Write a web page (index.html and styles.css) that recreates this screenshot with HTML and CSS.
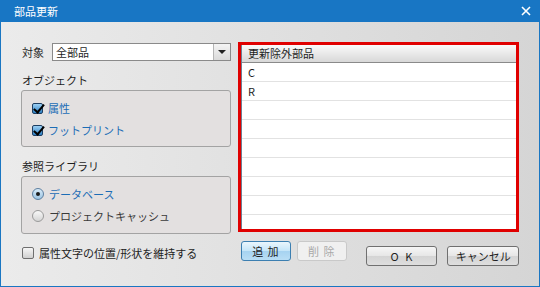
FILE: index.html
```html
<!DOCTYPE html>
<html lang="ja">
<head>
    <meta charset="UTF-8">
    <title>部品更新</title>
    <link rel="stylesheet" href="styles.css">
</head>
<body>
    <div class="window">
        <div class="titlebar">
            <span class="title">部品更新</span>
            <svg class="close" width="10" height="10" viewBox="0 0 10 10">
                <path d="M1 1 L9 9 M9 1 L1 9" stroke="#fff" stroke-width="1.6"/>
            </svg>
        </div>

        <div class="content">
            <div class="left">
                <div class="target-row">
                    <span class="label">対象</span>
                    <div class="combo">
                        <span class="combo-text">全部品</span>
                        <span class="combo-btn"><span class="arrow"></span></span>
                    </div>
                </div>

                <div class="group-title">オブジェクト</div>
                <div class="group">
                    <div class="option checked">
                        <span class="check on"></span><span class="opt-text">属性</span>
                    </div>
                    <div class="option checked">
                        <span class="check on"></span><span class="opt-text">フットプリント</span>
                    </div>
                </div>

                <div class="group-title second">参照ライブラリ</div>
                <div class="group second">
                    <div class="option checked">
                        <span class="radio on"></span><span class="opt-text">データベース</span>
                    </div>
                    <div class="option">
                        <span class="radio"></span><span class="opt-text">プロジェクトキャッシュ</span>
                    </div>
                </div>

                <div class="keep-row">
                    <span class="check"></span><span>属性文字の位置/形状を維持する</span>
                </div>
            </div>

            <div class="right">
                <div class="highlight">
                    <div class="list">
                        <div class="list-head">更新除外部品</div>
                        <div class="list-row">C</div>
                        <div class="list-row">R</div>
                        <div class="list-row"></div>
                        <div class="list-row"></div>
                        <div class="list-row"></div>
                        <div class="list-row"></div>
                        <div class="list-row"></div>
                        <div class="list-row"></div>
                        <div class="list-row"></div>
                    </div>
                </div>

                <div class="buttons">
                    <button class="btn small default">追 加</button>
                    <button class="btn small" disabled>削 除</button>
                    <button class="btn wide ok">O K</button>
                    <button class="btn wide">キャンセル</button>
                </div>
            </div>
        </div>
    </div>
</body>
</html>
```

FILE: styles.css
```css
body {
    margin: 0;
    font-family: "Noto Sans CJK JP", "Noto Sans", sans-serif;
    font-size: 11px;
    color: #1e1e1e;
}
.window {
    width: 540px;
    height: 287px;
    box-sizing: border-box;
    border: 1px solid #1a76c2;
    border-top: none;
    background: linear-gradient(to right, #ebebeb, #d5d5d5);
    display: flex;
    flex-direction: column;
}
.titlebar {
    height: 22px;
    margin: 0 -1px;
    background-color: #1876c4;
    display: flex;
    align-items: center;
    justify-content: space-between;
    padding: 0 9px 0 14px;
}
.title {
    color: #fff;
    font-size: 11px;
}
.content {
    display: flex;
    padding: 20px 0 0 20px;
    gap: 7px;
}
.left {
    width: 210px;
    display: flex;
    flex-direction: column;
}
.target-row {
    display: flex;
    align-items: center;
    height: 18px;
    margin-top: 1px;
}
.label {
    width: 30px;
    padding-left: 1px;
}
.combo {
    flex: 1;
    height: 18px;
    box-sizing: border-box;
    border: 1px solid #8a8a8a;
    background: #fff;
    display: flex;
    align-items: center;
}
.combo-text {
    flex: 1;
    padding-left: 3px;
}
.combo-btn {
    width: 16px;
    height: 16px;
    border-left: 1px solid #b5b5b5;
    background: linear-gradient(#f4f4f4, #dadada);
    display: flex;
    align-items: center;
    justify-content: center;
}
.arrow {
    width: 0;
    height: 0;
    border-left: 4px solid transparent;
    border-right: 4px solid transparent;
    border-top: 4px solid #222;
}
.group-title {
    margin-top: 10px;
    height: 18px;
    line-height: 18px;
    padding-left: 1px;
}
.group {
    margin-top: 1px;
    height: 57px;
    box-sizing: border-box;
    border: 1px solid #a3a3a3;
    border-radius: 3px;
    background-color: #e3e0e0;
    padding: 9px 0 0 10px;
    display: flex;
    flex-direction: column;
    gap: 6px;
}
.group.second {
    height: 58px;
}
.option {
    display: flex;
    align-items: center;
    height: 16px;
}
.option.checked .opt-text {
    color: #1c6db6;
}
.opt-text {
    color: #3a3a3a;
    margin-left: 5px;
}
.check {
    width: 9px;
    height: 9px;
    border: 1px solid #6f6f6f;
    border-radius: 2px;
    background: linear-gradient(#f6f6f6, #d0d0d0);
    position: relative;
    flex: none;
}
.check.on {
    border-color: #1d3e62;
    background: linear-gradient(#9cd0f4, #2c7ec2);
}
.check.on::after {
    content: "";
    position: absolute;
    left: 3px;
    top: -2px;
    width: 4px;
    height: 9px;
    border-right: 2px solid #000;
    border-bottom: 2px solid #000;
    transform: rotate(40deg);
}
.radio {
    width: 10px;
    height: 10px;
    border: 1px solid #9a9a9a;
    border-radius: 50%;
    background: linear-gradient(#f8f8f8, #d4d4d4);
    position: relative;
    flex: none;
}
.radio.on {
    border-color: #5d7fa0;
    background: linear-gradient(#d8ebf8, #9cc4e2);
}
.radio.on::after {
    content: "";
    position: absolute;
    left: 3px;
    top: 3px;
    width: 4px;
    height: 4px;
    border-radius: 50%;
    background: #1b1b1b;
}
.keep-row {
    display: flex;
    align-items: center;
    gap: 5px;
    margin-top: 12px;
    height: 14px;
    padding-left: 1px;
}
.keep-row .check {
    width: 10px;
    height: 10px;
}
.right {
    width: 281px;
    display: flex;
    flex-direction: column;
}
.highlight {
    margin-top: 0;
    height: 190px;
    box-sizing: border-box;
    border: 3px solid #e00000;
    overflow: hidden;
}
.list {
    height: 100%;
    border-left: 1px solid #6e7f93;
    background: #fff;
}
.list-head {
    height: 17px;
    line-height: 17px;
    padding-left: 6px;
    background: linear-gradient(#fafafa, #d8d8d8);
    border-bottom: 1px solid #8a8a8a;
}
.list-row {
    height: 18px;
    line-height: 18px;
    padding-left: 6px;
    border-bottom: 1px solid #e2e2e2;
}
.buttons {
    display: flex;
    align-items: flex-start;
    margin-top: 9px;
    padding-left: 3px;
}
.btn {
    font-family: inherit;
    font-size: 11px;
    color: #1e1e1e;
    height: 20px;
    padding: 0;
    border: 1px solid #707070;
    border-radius: 3px;
    background: linear-gradient(#f6f6f6 0%, #e6e6e6 50%, #d4d4d4 51%, #dedede 100%);
    letter-spacing: 1px;
}
.btn.small {
    width: 50px;
    margin-right: 6px;
}
.btn.default {
    border-color: #3c7fb1;
    background: linear-gradient(#eaf6fd 0%, #c4e5f8 50%, #a6d3f1 51%, #b9def5 100%);
}
.btn[disabled] {
    border-color: #c9c9c9;
    background: #f0f0f0;
    color: #a8a8a8;
}
.btn.wide {
    width: 72px;
    margin-top: 5px;
    letter-spacing: 0;
}
.btn.ok {
    margin-left: 13px;
    margin-right: 10px;
    letter-spacing: 2px;
    padding-left: 2px;
}
```
